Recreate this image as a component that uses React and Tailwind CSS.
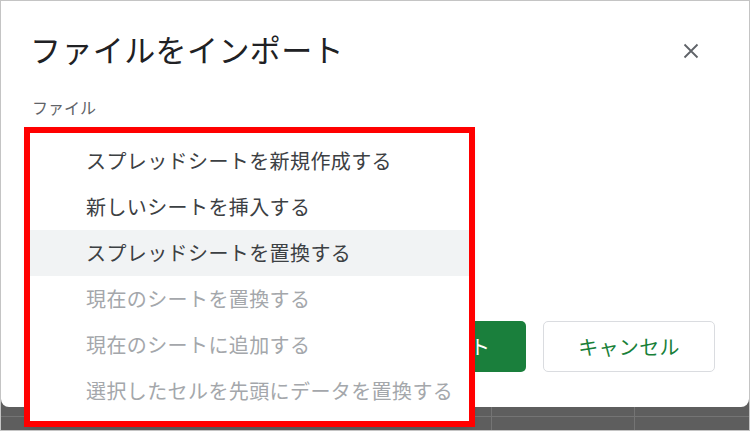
export default function App() {
  const items = [
    { t: "スプレッドシートを新規作成する", d: false },
    { t: "新しいシートを挿入する", d: false },
    { t: "スプレッドシートを置換する", d: false, h: true },
    { t: "現在のシートを置換する", d: true },
    { t: "現在のシートに追加する", d: true },
    { t: "選択したセルを先頭にデータを置換する", d: true },
  ];
  return (
    <div className="relative w-[750px] h-[431px] overflow-hidden border border-[#c4c4c4] bg-[#5e5e5e] flex flex-col font-['Noto_Sans_CJK_JP','Noto_Sans',sans-serif]">
      <div className="flex-1 bg-white rounded-b-[8px] flex flex-col pl-[29px] pr-[34px]">
        <div className="flex items-center justify-between pt-[27px]">
          <h1 className="text-[31px] leading-[42px] font-normal text-[#202124] tracking-[0.4px]">ファイルをインポート</h1>
          <button className="mr-[14px] mt-[4px] w-[20px] h-[20px] flex items-center justify-center">
            <svg width="16" height="16" viewBox="0 0 16 16">
              <path d="M1.5 1.5 L14.5 14.5 M14.5 1.5 L1.5 14.5" stroke="#5f6368" strokeWidth="1.8" fill="none" />
            </svg>
          </button>
        </div>
        <div className="mt-[25px] pl-[2px] text-[16px] leading-[24px] text-[#5f6368]">ファイル</div>
        <div className="flex-1" />
        <div className="flex justify-end gap-[17px] pb-[35px]">
          <button className="h-[51px] w-[172px] rounded-[5px] bg-[#1a7f3c] text-white text-[20px]">インポート</button>
          <button className="h-[51px] w-[172px] rounded-[5px] border border-[#dadce0] bg-white text-[#188038] text-[20px] tracking-[0.3px]">キャンセル</button>
        </div>
      </div>
      <div className="h-[23px] flex flex-col">
        <div className="h-[10px] flex border-b border-[#747474]">
          <div className="w-[491px] border-r border-[#747474]" />
          <div className="w-[143px] border-r border-[#747474]" />
          <div className="flex-1" />
        </div>
        <div className="flex-1 flex">
          <div className="w-[491px] border-r border-[#747474]" />
          <div className="w-[143px] border-r border-[#747474]" />
          <div className="flex-1" />
        </div>
      </div>

      <div className="absolute left-[29px] top-[132px] w-[440px] h-[290px] bg-white shadow-[0_2px_8px_rgba(0,0,0,0.25)] pt-[5px]">
        {items.map((it, i) => (
          <div
            key={i}
            className={
              "h-[46px] flex items-center pl-[56px] text-[20px] leading-none tracking-[0.4px] " +
              (it.h ? "bg-[#f1f3f4] " : "") +
              (it.d ? "text-[#a4a7ab]" : "text-[#3c4043]")
            }
          >
            {it.t}
          </div>
        ))}
      </div>

      <div className="absolute left-[23px] top-[126px] w-[451px] h-[300px] border-[6px] border-[#ff0000]" />
    </div>
  );
}
